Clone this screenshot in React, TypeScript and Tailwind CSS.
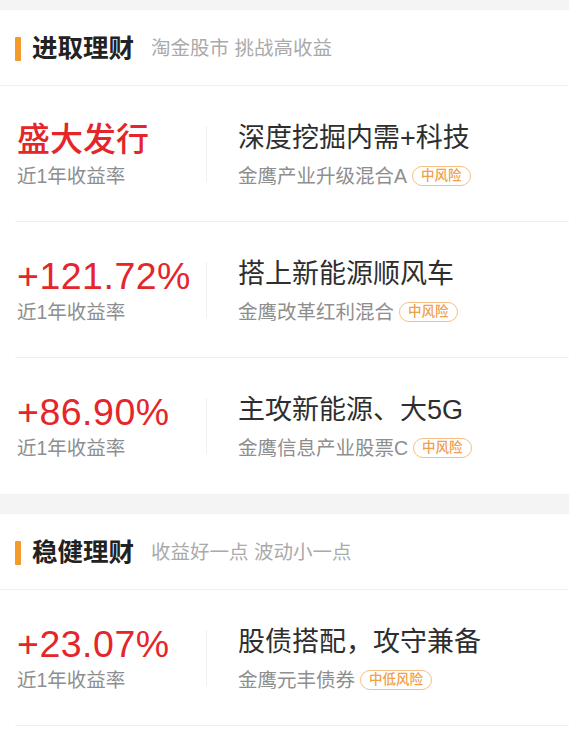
import React from "react";

interface Fund {
  rate: string;
  isText?: boolean;
  slogan: string;
  name: string;
  risk: string;
}

interface Section {
  title: string;
  desc: string;
  funds: Fund[];
}

const sections: Section[] = [
  {
    title: "进取理财",
    desc: "淘金股市 挑战高收益",
    funds: [
      { rate: "盛大发行", isText: true, slogan: "深度挖掘内需+科技", name: "金鹰产业升级混合A", risk: "中风险" },
      { rate: "+121.72%", slogan: "搭上新能源顺风车", name: "金鹰改革红利混合", risk: "中风险" },
      { rate: "+86.90%", slogan: "主攻新能源、大5G", name: "金鹰信息产业股票C", risk: "中风险" },
    ],
  },
  {
    title: "稳健理财",
    desc: "收益好一点 波动小一点",
    funds: [{ rate: "+23.07%", slogan: "股债搭配，攻守兼备", name: "金鹰元丰债券", risk: "中低风险" }],
  },
];

function FundRow({ fund, last }: { fund: Fund; last: boolean }) {
  return (
    <div className="pl-[15px]">
      <div className={`flex items-center h-[136px] ${last ? "" : "border-b border-[#efefef]"}`}>
        <div className="w-[191px] shrink-0 pl-[2px] pb-[2px]">
          {fund.isText ? (
            <p className="text-[33px] leading-[44px] font-medium text-[#e4262b]">{fund.rate}</p>
          ) : (
            <p className="text-[37.5px] leading-[44px] tracking-[0.5px] text-[#e4262b]">{fund.rate}</p>
          )}
          <p className="mt-[2px] text-[19.5px] leading-[24px] text-[#8e8e8e]">近1年收益率</p>
        </div>
        <div className="w-px h-[56px] bg-[#f0f0f0] shrink-0" />
        <div className="pl-[31px] pb-[2px]">
          <p className="text-[27px] leading-[40px] text-[#2e2e2e]">{fund.slogan}</p>
          <div className="mt-[6px] flex items-center gap-[5px]">
            <span className="text-[19.5px] leading-[24px] text-[#8e8e8e]">{fund.name}</span>
            <span className="h-[20px] px-[8px] rounded-full border-[1.5px] border-[#f6bf85] text-[13.5px] leading-[17px] font-medium text-[#f0a04a]">
              {fund.risk}
            </span>
          </div>
        </div>
      </div>
    </div>
  );
}

export default function App() {
  return (
    <div
      className="w-[569px] min-h-[729px] bg-white overflow-hidden"
      style={{ fontFamily: '"Liberation Sans", "Noto Sans CJK SC", sans-serif' }}
    >
      <div className="h-[10px] bg-[#f4f4f4]" />
      {sections.map((s, si) => (
        <div key={s.title}>
          {si > 0 && <div className="h-[20px] bg-[#f4f4f4]" />}
          <div className="flex items-center h-[76px] border-b border-[#f0f0f0] pl-[15px] pt-[2px]">
            <div className="w-[6px] h-[24px] bg-[#f39a2b] rounded-[1px]" />
            <span className="ml-[11px] text-[25.5px] font-bold text-[#222]">{s.title}</span>
            <span className="ml-[17px] text-[19.5px] text-[#aaa]">{s.desc}</span>
          </div>
          {s.funds.map((f, i) => (
            <FundRow key={f.name} fund={f} last={si === 0 && i === s.funds.length - 1} />
          ))}
        </div>
      ))}
    </div>
  );
}
